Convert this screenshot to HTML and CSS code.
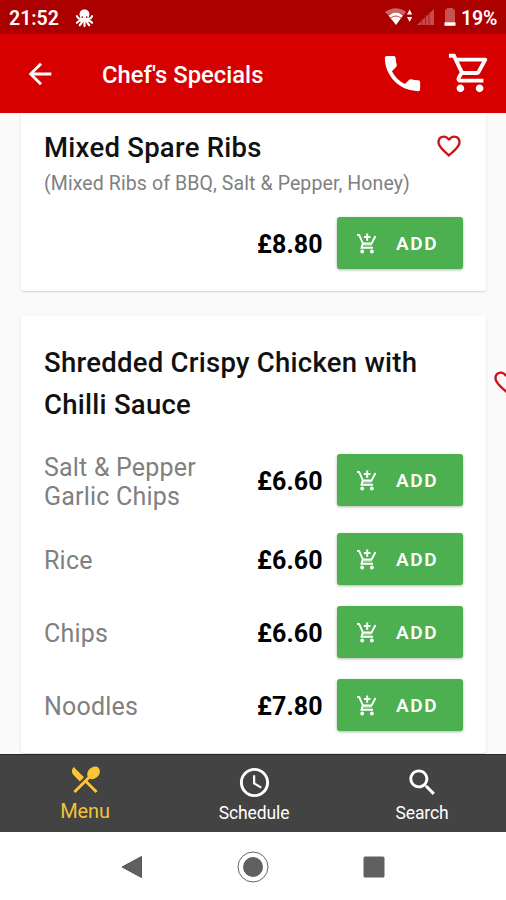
FILE: index.html
```html
<!DOCTYPE html>
<html lang="en">
<head>
<meta charset="utf-8">
<title>Chef's Specials</title>
<link rel="stylesheet" href="styles.css">
</head>
<body>
<svg class="defs" aria-hidden="true">
  <symbol id="heart" viewBox="0 0 24 24"><path d="M16.5 3c-1.74 0-3.41.81-4.5 2.09C10.91 3.81 9.24 3 7.5 3 4.42 3 2 5.42 2 8.5c0 3.78 3.4 6.86 8.55 11.54L12 21.35l1.45-1.32C18.6 15.36 22 12.28 22 8.5 22 5.42 19.58 3 16.5 3zm-4.4 15.55l-.1.1-.1-.1C7.14 14.24 4 11.39 4 8.5 4 6.5 5.5 5 7.5 5c1.54 0 3.04.99 3.57 2.36h1.87C13.46 5.99 14.96 5 16.5 5c2 0 3.5 1.5 3.5 3.5 0 2.89-3.14 5.74-7.9 10.05z"/></symbol>
  <symbol id="add-cart" viewBox="0 0 24 24">
    <path d="M2 4h2.200L7.800 12.200 6.500 16.800H18M7.500 12.500H16.500L20.500 5" fill="none" stroke="#fff" stroke-width="1.900"/>
    <path d="M7.500 14h9.500" fill="none" stroke="#fff" stroke-opacity=".6" stroke-width="1.400"/>
    <path d="M12.200 2.500V9.800M8.900 6h6.600" fill="none" stroke="#fff" stroke-width="2"/>
    <circle cx="7.200" cy="20.500" r="1.900"/><circle cx="16.900" cy="20.500" r="1.900"/>
  </symbol>
</svg>
<div class="screen">
  <div class="status">
    <span class="time">21:52</span>
    <svg class="octopus" viewBox="0 0 20 20">
      <path fill="#fff" d="M10 .5c3.200 0 5.200 2.200 5.200 5.200 0 2-1.200 3-1.200 5.300l-1 3H7l-1-3C6 8.700 4.800 7.700 4.800 5.700 4.800 2.700 6.800.5 10 .5z"/>
      <path fill="none" stroke="#fff" stroke-width="2.200" stroke-linecap="round" stroke-linejoin="round" d="M7 10.500Q3.500 11 2 7.500M13 10.500Q16.500 11 18 7.500M7.500 11.500Q4 12 2 14.500M12.500 11.500Q16 12 18 14.500M8 12Q7 15 5 17M12 12Q13 15 15 17M10 12V18"/>
      <circle cx="7.700" cy="8.500" r=".9" fill="#a00"/><circle cx="12.300" cy="8.500" r=".9" fill="#a00"/>
    </svg>
    <svg class="signals" viewBox="0 0 78 22">
      <path fill="#fff" fill-opacity=".4" d="M0 5Q11-2.500 21 5L18.500 8Q11 3 3 8z"/>
      <path fill="#fff" d="M3.500 8.500Q11 2.500 18 8.500L11 18z"/>
      <path d="M5.500 11Q11 7 16 11" fill="none" stroke="#b33" stroke-width=".9"/>
      <path fill="#fff" d="M22 7.500l2.600-5 2.600 5zM22 10l2.600 5 2.600-5z"/>
      <path fill="#c84c4c" d="M32 18L49 2v16z"/>
      <path stroke="#ad1717" stroke-width="1" d="M37 18v-7M40.500 18V8M44 18V5"/>
      <path fill="#c75252" d="M60 2.500h2V1h6v1.500h2V16H60z"/><path fill="#fff" d="M59.500 15.300h11V18.800h-11z"/>
    </svg>
    <span class="percent">19%</span>
  </div>
  <header class="appbar">
    <svg class="back" viewBox="0 0 24 24"><path d="M20 11H7.830l5.590-5.590L12 4l-8 8 8 8 1.410-1.410L7.830 13H20v-2z"/></svg>
    <h1>Chef's Specials</h1>
    <svg class="phone" viewBox="0 0 24 24"><path d="M6.620 10.790c1.440 2.830 3.760 5.140 6.590 6.590l2.200-2.200c.27-.27.67-.36 1.020-.24 1.120.37 2.330.57 3.570.57.55 0 1 .45 1 1V20c0 .55-.45 1-1 1-9.390 0-17-7.610-17-17 0-.55.45-1 1-1h3.500c.55 0 1 .45 1 1 0 1.250.2 2.450.57 3.570.11.35.03.74-.25 1.020l-2.200 2.200z"/></svg>
    <svg class="basket" viewBox="0 0 24 24"><path d="M15.550 13c.75 0 1.410-.41 1.750-1.030l3.580-6.490c.37-.66-.11-1.480-.87-1.480H5.210l-.94-2H1v2h2l3.600 7.590-1.350 2.440C4.520 15.370 5.480 17 7 17h12v-2H7l1.100-2h7.450zM6.160 6h12.150l-2.760 5H8.530L6.160 6zM7 18c-1.100 0-1.990.9-1.990 2S5.900 22 7 22s2-.9 2-2-.9-2-2-2zm10 0c-1.100 0-1.990.9-1.990 2s.89 2 1.990 2 2-.9 2-2-.9-2-2-2z"/></svg>
  </header>
  <main>
    <section class="card first">
      <div class="heading"><h2>Mixed Spare Ribs</h2><svg class="heart"><use href="#heart"/></svg></div>
      <p class="desc">(Mixed Ribs of BBQ, Salt &amp; Pepper, Honey)</p>
      <div class="row"><span class="option"></span><b>£8.80</b><button><svg><use href="#add-cart"/></svg><span>ADD</span></button></div>
    </section>
    <section class="card second">
      <div class="heading"><h2>Shredded Crispy Chicken with Chilli Sauce</h2><svg class="heart"><use href="#heart"/></svg></div>
      <div class="row tall"><span class="option">Salt &amp; Pepper<br>Garlic Chips</span><b>£6.60</b><button><svg><use href="#add-cart"/></svg><span>ADD</span></button></div>
      <div class="row"><span class="option">Rice</span><b>£6.60</b><button><svg><use href="#add-cart"/></svg><span>ADD</span></button></div>
      <div class="row"><span class="option">Chips</span><b>£6.60</b><button><svg><use href="#add-cart"/></svg><span>ADD</span></button></div>
      <div class="row"><span class="option">Noodles</span><b>£7.80</b><button><svg><use href="#add-cart"/></svg><span>ADD</span></button></div>
    </section>
  </main>
  <nav class="tabs">
    <a class="active"><svg viewBox="0 0 24 24"><path d="M8.100 13.340l2.830-2.830L3.910 3.500c-1.560 1.560-1.560 4.090 0 5.660l4.190 4.180zm6.780-1.810c1.530.71 3.680.21 5.270-1.380 1.910-1.910 2.280-4.650.81-6.120-1.460-1.460-4.200-1.100-6.120.81-1.590 1.590-2.090 3.740-1.380 5.270L3.700 19.870l1.410 1.410L12 14.410l6.880 6.880 1.410-1.410L13.410 13l1.470-1.470z"/></svg><span>Menu</span></a>
    <a><svg viewBox="0 0 24 24"><path d="M11.990 2C6.470 2 2 6.480 2 12s4.470 10 9.990 10C17.520 22 22 17.520 22 12S17.520 2 11.990 2zM12 20c-4.420 0-8-3.580-8-8s3.580-8 8-8 8 3.580 8 8-3.580 8-8 8zm.5-13H11v6l5.250 3.150.75-1.230-4.500-2.670z"/></svg><span>Schedule</span></a>
    <a><svg viewBox="0 0 24 24"><path d="M15.500 14h-.79l-.28-.27C15.410 12.590 16 11.110 16 9.500 16 5.910 13.090 3 9.500 3S3 5.910 3 9.500 5.910 16 9.500 16c1.610 0 3.090-.59 4.230-1.570l.27.28v.79l5 4.990L20.490 19l-4.990-5zm-6 0C7.010 14 5 11.990 5 9.500S7.010 5 9.500 5 14 7.010 14 9.500 11.990 14 9.500 14z"/></svg><span>Search</span></a>
  </nav>
  <div class="sysnav">
    <svg viewBox="0 0 32 32"><path d="M6 16L25.500 5.500v21z" stroke="#555" stroke-linejoin="round"/></svg>
    <svg viewBox="0 0 32 32"><circle cx="16" cy="16" r="15" fill="#fff" stroke="#666"/><circle cx="16" cy="16" r="10"/></svg>
    <svg viewBox="0 0 32 32"><rect x="5.500" y="5.500" width="21" height="21" rx="1.500"/></svg>
  </div>
</div>
</body>
</html>
```
FILE: styles.css
```css
* { box-sizing: border-box; }
body { margin: 0; font-family: Roboto, sans-serif; background: #fff; }
h1, h2, p { margin: 0; }
svg { display: block; flex: none; }
.defs { display: none; }
.screen { width: 506px; height: 900px; display: flex; flex-direction: column; overflow: hidden; }

.status { height: 34px; flex: none; background: #ab0000; color: #fff; display: flex; align-items: center; padding: 2px 7px 0 9px; font-size: 19px; font-weight: 500; }
.time { width: 66px; font-size: 19.5px; font-weight: 600; }
.octopus { width: 19px; height: 19px; }
.signals { width: 78px; height: 22px; margin-left: auto; margin-right: -2px; }
.percent { width: 38px; font-size: 19.5px; font-weight: 600; letter-spacing: -.1px; white-space: nowrap; }

.appbar { height: 79px; flex: none; background: #d60000; color: #fff; fill: #fff; display: flex; align-items: center; padding-left: 23px; position: relative; z-index: 1; }
.back { width: 34px; height: 34px; }
.appbar h1 { margin-left: 45px; font-size: 23.8px; font-weight: 500; line-height: 30px; padding-top: 2px; white-space: nowrap; }
.phone { width: 47px; height: 47px; margin-left: auto; margin-right: 21px; }
.basket { width: 46px; height: 46px; margin-right: 13px; margin-bottom: 2px; }

main { flex: 1; min-height: 0; background: #fafafa; padding: 0 20px 2px 21px; overflow: hidden; }
.card { background: #fff; border-radius: 3px; box-shadow: 0 1px 2px rgba(0,0,0,.15); padding: 0 23px; }
.first { height: 178px; padding-top: 13px; border-radius: 0 0 3px 3px; }
.second { height: 437px; margin-top: 25px; padding-top: 25px; }
.heading { display: flex; align-items: center; }
h2 { font-size: 27.5px; font-weight: 500; letter-spacing: .26px; line-height: 42px; padding-top: 1px; margin-bottom: -1px; color: #111; flex: 1; }
.heart { width: 28px; height: 28px; fill: #cf1016; margin-bottom: 3px; }
.second h2 { flex: 0 0 448px; padding-right: 30px; }
.desc { font-size: 19.5px; font-weight: 400; letter-spacing: .1px; line-height: 30px; padding-top: 1px; margin-bottom: -1px; color: #808080; white-space: nowrap; }
.row { display: flex; align-items: center; height: 52px; margin-bottom: 21px; }
.first .row { margin-top: 19px; }
.row.tall { margin-top: 29px; margin-bottom: 27px; }
.option { width: 213px; font-size: 25px; font-weight: 400; letter-spacing: .2px; line-height: 29px; padding-top: 3px; color: #808080; }
.row b { width: 80px; font-size: 25px; font-weight: 700; letter-spacing: .1px; color: #000; padding: 3px 0 0 0; white-space: nowrap; }
button { width: 126px; height: 52px; border: 0; border-radius: 3px; background: #4caf50; color: #fff; fill: #fff; padding: 0 0 0 18px; display: flex; align-items: center; font: 600 19px Roboto, sans-serif; box-shadow: 0 1px 3px rgba(0,0,0,.3); }
button svg { width: 24px; height: 24px; margin: 0 17px 1px 0; }
button span { letter-spacing: 1.6px; padding-top: 1px; }

.tabs { height: 78px; flex: none; background: #434343; border-top: 1px solid #292929; display: grid; grid-template-columns: 170px 168px 168px; color: #fff; fill: #fff; }
.tabs a { display: flex; flex-direction: column; align-items: center; padding-top: 10px; font-size: 17.500px; }
.tabs svg { width: 35px; height: 35px; }
.tabs span { line-height: 24px; margin-top: 1px; letter-spacing: -.1px; }
.tabs .active { color: #f4c23a; fill: #fdc536; font-size: 20px; padding-top: 7px; }
.tabs .active span { margin-top: 2px; }
.sysnav { height: 68px; flex: none; background: #fff; display: flex; justify-content: center; align-items: center; gap: 89px; fill: #606060; padding-top: 1px; }
.sysnav svg { width: 32px; height: 32px; }
```
